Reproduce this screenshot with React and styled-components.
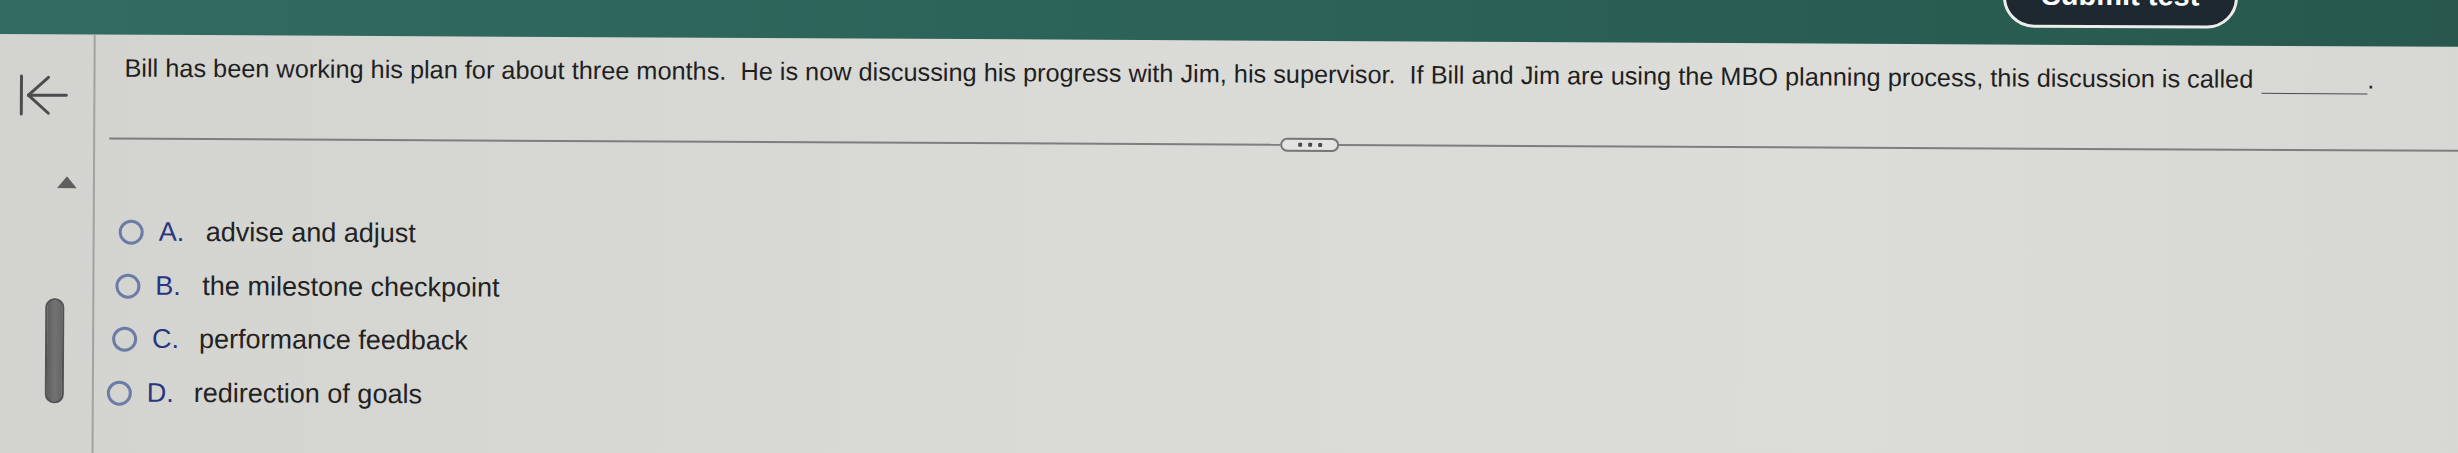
import React from "react"
import styled, { createGlobalStyle } from 'styled-components'

// the photo is tilted a little; the whole page is turned to follow it
const GlobalStyle = createGlobalStyle`
  html, body {
    margin: 0;
    padding: 0;
  }
  body {
    background: #28584d;
    font-family: "Liberation Sans", Arial, sans-serif;
    overflow: hidden;
  }
`;

const Page = styled.div`
  width: 2470px;
  height: 473px;
  margin-top: -20px;
  display: flex;
  flex-direction: column;
  overflow: hidden;
  transform: rotate(0.3deg);
  transform-origin: 0 0;
`;

const TopBar = styled.header`
  height: 54px;
  flex: none;
  display: flex;
  justify-content: flex-end;
  padding-right: 232px;
  background: linear-gradient(to right, #316b62 0%, #2c6359 45%, #28584d 100%);
  overflow: hidden;
`;

const SubmitButton = styled.button`
  width: 235px;
  height: 62px;
  margin-top: -25px;
  padding: 0 0 3px;
  display: flex;
  align-items: center;
  justify-content: center;
  background: #1d2830;
  color: #ffffff;
  border: 3px solid #ececea;
  border-radius: 32px;
  font-family: "Liberation Sans", Arial, sans-serif;
  font-size: 29px;
  font-weight: bold;
  line-height: 29px;
`;

const Body = styled.div`
  flex: 1;
  display: flex;
  background: linear-gradient(to right, #d3d3d0 0%, #dadad7 45%, #dcdcd9 75%, #d7d7d4 100%);
`;

const Sidebar = styled.aside`
  width: 94px;
  flex: none;
  display: flex;
  flex-direction: column;
  align-items: flex-start;
  border-right: 2px solid #a2a2a0;
`;

const BackButton = styled.div`
  margin-top: 40px;
  margin-left: 18px;
  width: 52px;
  height: 42px;
  svg { display: block; }
`;

const UpArrow = styled.div`
  margin-top: 60px;
  margin-left: 58px;
  width: 20px;
  height: 12px;
  svg { display: block; }
`;

const ScrollThumb = styled.div`
  margin-top: 110px;
  margin-left: 47px;
  width: 19px;
  height: 105px;
  box-sizing: border-box;
  border: 2px solid #525252;
  border-radius: 9px;
  background: linear-gradient(to right, #5f5f5f, #727272 50%, #666666);
`;

const Main = styled.main`
  flex: 1;
  display: flex;
  flex-direction: column;
`;

const Question = styled.p`
  margin: 0;
  padding: 18px 0 0 29px;
  font-size: 25.3px;
  line-height: 30px;
  color: #1f1f1f;
  white-space: pre;
`;

const Blank = styled.span`
  display: inline-block;
  width: 106px;
  margin-left: 8px;
  border-bottom: 1.5px solid #4a4a4a;
  vertical-align: -6px;
`;

const Separator = styled.div`
  margin: 49px 0 0 14px;
  height: 14px;
  display: flex;
  align-items: center;
`;

const Rule = styled.div`
  flex: ${p => p.$grow};
  height: 2px;
  background: #7e7e7c;
`;

const MorePill = styled.div`
  width: 59px;
  height: 14px;
  box-sizing: border-box;
  border: 2px solid #767676;
  border-radius: 8px;
  background: #e3e3e1;
  display: flex;
  align-items: center;
  justify-content: center;
  gap: 6px;
`;

const Dot = styled.span`
  width: 4px;
  height: 4px;
  border-radius: 1px;
  background: #4b4b4b;
`;

const Options = styled.div`
  margin-top: 60px;
  display: flex;
  flex-direction: column;
`;

const OptionRow = styled.label`
  height: 53.5px;
  display: flex;
  align-items: center;
  padding-left: ${p => p.$indent}px;
  font-size: 27px;
`;

const Radio = styled.span`
  width: 25px;
  height: 25px;
  flex: none;
  box-sizing: border-box;
  border: 3px solid #6b7da6;
  border-radius: 50%;
  margin-right: 15px;
`;

const Letter = styled.span`
  width: 47px;
  flex: none;
  color: #283680;
`;

const OptionText = styled.span`
  color: #222222;
`;

const options = [
  { letter: "A.", text: "advise and adjust", indent: 24 },
  { letter: "B.", text: "the milestone checkpoint", indent: 21 },
  { letter: "C.", text: "performance feedback", indent: 18 },
  { letter: "D.", text: "redirection of goals", indent: 13 },
];

const App = () => {
  return (
    <>
      <GlobalStyle />
      <Page>
        <TopBar>
          <SubmitButton>Submit test</SubmitButton>
        </TopBar>
        <Body>
          <Sidebar>
            <BackButton>
              <svg width="52" height="42" viewBox="0 0 52 42" fill="none" stroke="#4d4d4d" strokeWidth="3" strokeLinecap="round" strokeLinejoin="round">
                <line x1="4" y1="2" x2="4" y2="40" />
                <line x1="11" y1="21" x2="49" y2="21" />
                <polyline points="31,3 11,21 31,39" />
              </svg>
            </BackButton>
            <UpArrow>
              <svg width="20" height="12" viewBox="0 0 20 12">
                <polygon points="0,12 10,0 20,12" fill="#5f5f5f" />
              </svg>
            </UpArrow>
            <ScrollThumb />
          </Sidebar>
          <Main>
            <Question>
              {"Bill has been working his plan for about three months.  He is now discussing his progress with Jim, his supervisor.  If Bill and Jim are using the MBO planning process, this discussion is called"}
              <Blank />.
            </Question>
            <Separator>
              <Rule $grow={1171} />
              <MorePill>
                <Dot />
                <Dot />
                <Dot />
              </MorePill>
              <Rule $grow={1130} />
            </Separator>
            <Options>
              {options.map(o => (
                <OptionRow key={o.letter} $indent={o.indent}>
                  <Radio />
                  <Letter>{o.letter}</Letter>
                  <OptionText>{o.text}</OptionText>
                </OptionRow>
              ))}
            </Options>
          </Main>
        </Body>
      </Page>
    </>
  )
}

export default App
